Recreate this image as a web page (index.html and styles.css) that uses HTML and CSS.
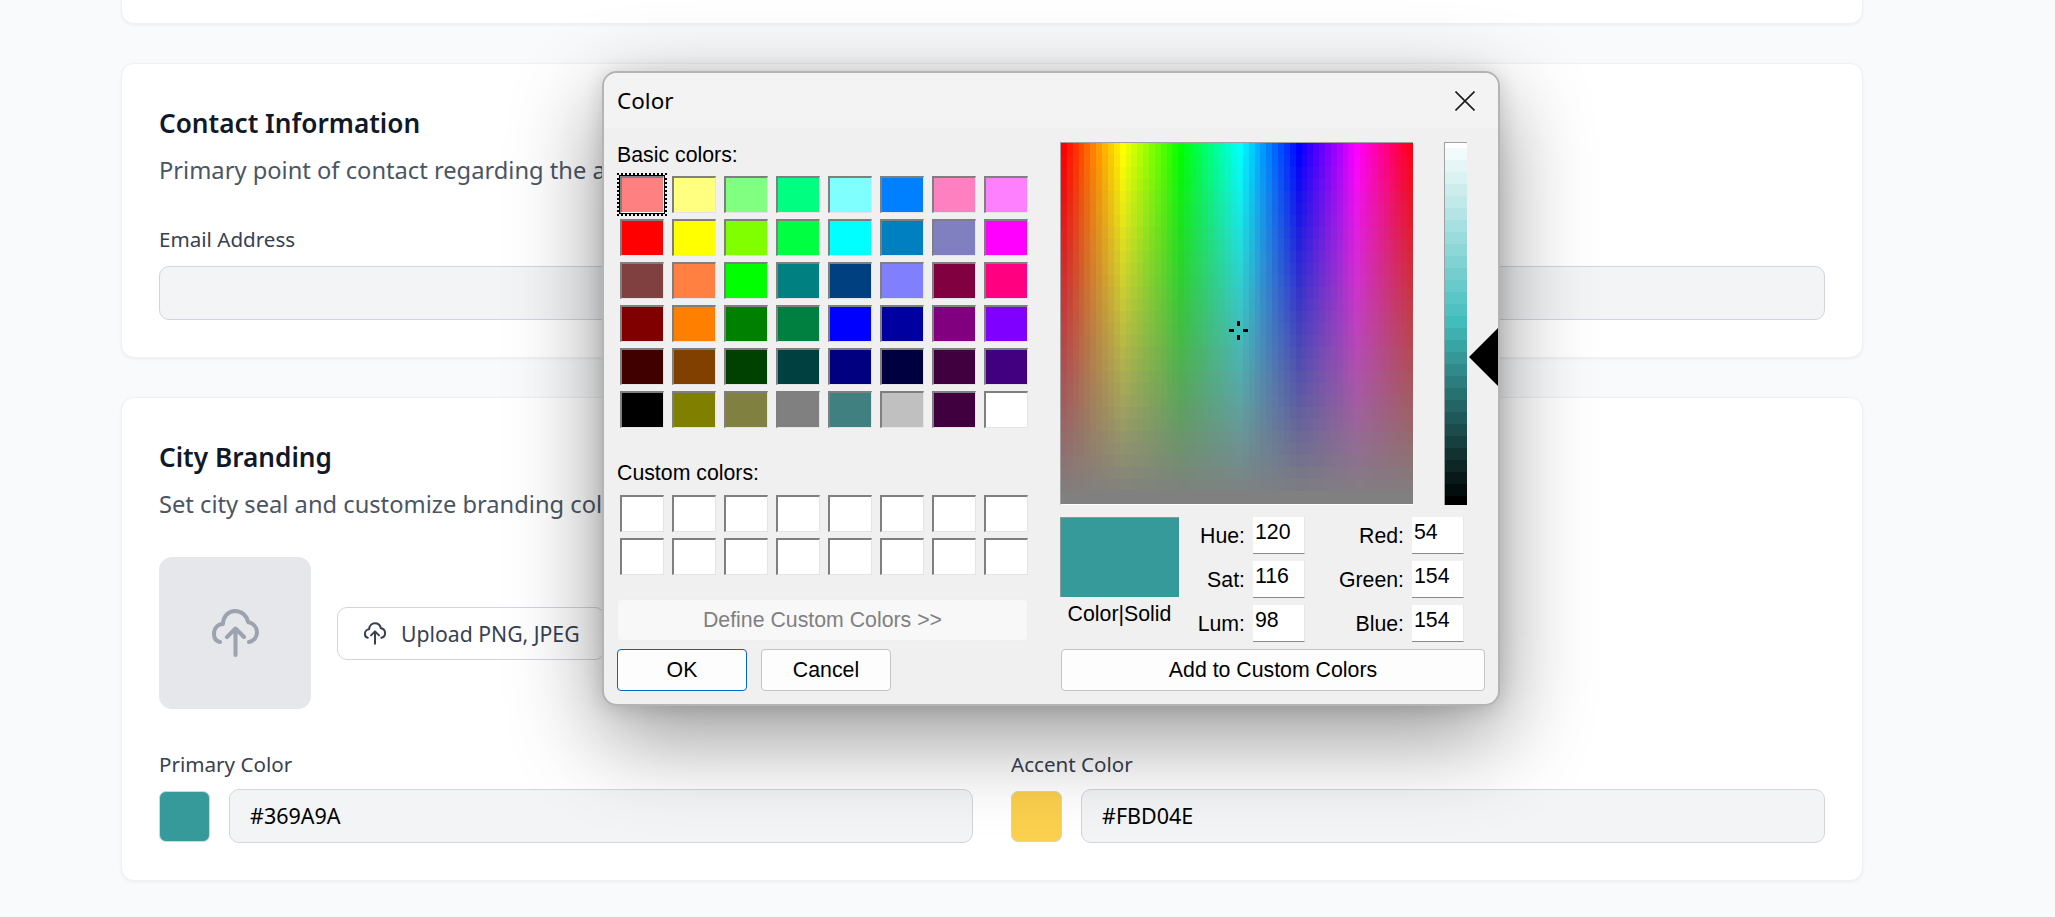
FILE: index.html
```html
<!DOCTYPE html>
<html>
<head>
  <meta charset="UTF-8">
  <title>City Settings</title>
  <link rel="stylesheet" href="styles.css">
</head>
<body>
  <div class="page">
    <div class="card card-cut"></div>

    <!-- Contact -->
    <section class="card">
      <h2>Contact Information</h2>
      <p class="desc">Primary point of contact regarding the a</p>
      <label class="label">Email Address</label>
      <div class="input"></div>
    </section>

    <!-- Branding -->
    <section class="card">
      <h2>City Branding</h2>
      <p class="desc">Set city seal and customize branding col</p>
      <div class="seal-row">
        <div class="seal">
          <svg class="seal-icon" viewBox="7 9 47 48"><path d="M15 42C10 41 9 37 9 34C9 28 13 24 18 24C18 16 24 11 30 11C37 11 42 16 43 22C48 23 52 27 52 32C52 37 49 41 44 42M30.500 55V29M22 37L30.500 28.500L39 37"/></svg>
        </div>
        <div class="upload-btn">
          <svg class="upload-icon" viewBox="7 9 47 48"><path d="M15 42C10 41 9 37 9 34C9 28 13 24 18 24C18 16 24 11 30 11C37 11 42 16 43 22C48 23 52 27 52 32C52 37 49 41 44 42M30.500 55V29M22 37L30.500 28.500L39 37"/></svg>
          Upload PNG, JPEG
        </div>
      </div>
      <div class="color-cols">
        <div>
          <label class="label">Primary Color</label>
          <div class="color-row">
            <div class="color-chip chip-primary"></div>
            <div class="input">#369A9A</div>
          </div>
        </div>
        <div>
          <label class="label">Accent Color</label>
          <div class="color-row">
            <div class="color-chip chip-accent"></div>
            <div class="input">#FBD04E</div>
          </div>
        </div>
      </div>
    </section>
  </div>

  <!-- Color dialog -->
  <div class="dialog">
    <div class="dialog-title">
      <span>Color</span>
      <svg class="close" viewBox="0 0 20 20"><path d="M0.500 0.500L19.500 19.500M19.500 0.500L0.500 19.500"/></svg>
    </div>
    <div class="dialog-body">
      <div class="col-left">
        <div class="dlg-label">Basic colors:</div>
        <div class="swatches" id="basicColors"></div>
        <div class="dlg-label custom-label">Custom colors:</div>
        <div class="swatches" id="customColors"></div>
        <div class="dlg-btn define-btn">Define Custom Colors &gt;&gt;</div>
        <div class="btn-row">
          <div class="dlg-btn ok-btn">OK</div>
          <div class="dlg-btn cancel-btn">Cancel</div>
        </div>
      </div>
      <div class="col-right">
        <div class="picker-row">
          <div class="spectrum">
            <canvas id="spectrum" width="352" height="361"></canvas>
            <div class="cross">
              <i class="cross-t"></i><i class="cross-b"></i><i class="cross-l"></i><i class="cross-r"></i>
            </div>
          </div>
          <div class="lum">
            <canvas id="lum" width="22" height="362"></canvas>
            <div class="lum-arrow"></div>
          </div>
        </div>
        <div class="values-row">
          <div class="preview-col">
            <div class="preview"></div>
            <div class="preview-name">Color|Solid</div>
          </div>
          <div class="fields">
            <span class="f-label">Hue:</span><div class="f-input">120</div>
            <span class="f-label">Red:</span><div class="f-input">54</div>
            <span class="f-label">Sat:</span><div class="f-input">116</div>
            <span class="f-label">Green:</span><div class="f-input">154</div>
            <span class="f-label">Lum:</span><div class="f-input">98</div>
            <span class="f-label">Blue:</span><div class="f-input">154</div>
          </div>
        </div>
        <div class="dlg-btn add-btn">Add to Custom Colors</div>
      </div>
    </div>
  </div>

  <script src="script.js"></script>
</body>
</html>
```

FILE: styles.css
```css
* {
  box-sizing: border-box;
}
html, body {
  margin: 0;
  height: 100%;
  overflow: hidden;
}
body {
  font-family: "Noto Sans", sans-serif;
  background: #f9fafb;
  color: #111827;
  position: relative;
}
.page {
  padding: 0 192px 0 121px;
  display: flex;
  flex-direction: column;
  gap: 39px;
}
.card {
  background: #fff;
  border: 1px solid #f0f1f3;
  border-radius: 13px;
  box-shadow: 0 1px 3px rgba(0, 0, 0, 0.06);
  padding: 42px 37px 37px;
}
.card-cut {
  height: 24px;
  padding: 0;
  border-top: 0;
  border-radius: 0 0 13px 13px;
}
h2 {
  margin: 0;
  font-size: 26.200px;
  line-height: 34px;
  font-weight: 600;
}
.desc {
  margin: 13px 0 0;
  font-size: 23.700px;
  line-height: 34px;
  color: #4b5563;
  white-space: nowrap;
}
.label {
  display: block;
  font-size: 20.600px;
  line-height: 26px;
  color: #374151;
}
.card > .label {
  margin-top: 39px;
}
.card > .input {
  margin-top: 14px;
}
.input {
  flex: 1;
  height: 54px;
  padding: 0 20px;
  background: #f3f4f6;
  border: 1px solid #d1d5db;
  border-radius: 10px;
  font-size: 21.500px;
  line-height: 52px;
  color: #000;
}
.seal-row {
  display: flex;
  align-items: center;
  gap: 26px;
  margin-top: 36px;
}
.seal {
  width: 152px;
  height: 152px;
  background: #e5e7eb;
  border-radius: 13px;
  display: flex;
  align-items: center;
  justify-content: center;
}
.seal-icon, .upload-icon {
  fill: none;
  stroke-linecap: round;
  stroke-linejoin: round;
}
.seal-icon {
  width: 47px;
  height: 48px;
  stroke: #9ca3af;
  stroke-width: 4;
}
.upload-btn {
  display: flex;
  align-items: center;
  gap: 15px;
  height: 53px;
  padding: 0 24px 0 26px;
  background: #fff;
  border: 1px solid #d1d5db;
  border-radius: 10px;
  font-size: 21.200px;
  white-space: nowrap;
  color: #374151;
}
.upload-icon {
  width: 22px;
  height: 23px;
  stroke: #374151;
  stroke-width: 4.300;
}
.color-cols {
  display: grid;
  grid-template-columns: 1fr 1fr;
  gap: 38px;
  margin-top: 42px;
}
.color-row {
  display: flex;
  align-items: center;
  gap: 19px;
  margin-top: 12px;
}
.color-chip {
  width: 51px;
  height: 51px;
  border: 1px solid #d1d5db;
  border-radius: 7px;
}
.chip-primary {
  background: #369a9a;
}
.chip-accent {
  background: #fbd04e;
}

/* dialog */
.dialog {
  position: absolute;
  left: 602px;
  top: 71px;
  width: 898px;
  height: 635px;
  background: #f0f0f0;
  border: 2px solid #b4b4b4;
  border-radius: 15px;
  box-shadow: 0 30px 90px rgba(0, 0, 0, 0.42), 0 2px 20px rgba(0, 0, 0, 0.14);
  overflow: hidden;
  font-family: "Liberation Sans", Arial, sans-serif;
  font-size: 21.300px;
  color: #000;
}
.dialog-title {
  height: 55px;
  padding: 0 23px 0 13px;
  background: #f3f3f3;
  display: flex;
  align-items: center;
  justify-content: space-between;
  font-family: "Noto Sans", sans-serif;
  font-size: 22.500px;
}
.close {
  width: 20px;
  height: 20px;
  fill: none;
  stroke: #1c1c1c;
  stroke-width: 1.600;
}
.dialog-body {
  display: flex;
  gap: 32px;
  padding: 14px 0 0 13px;
}
.col-left {
  width: 411px;
}
.dlg-label {
  height: 34px;
  line-height: 26px;
}
.custom-label {
  margin-top: 30px;
  height: 37px;
  line-height: 30px;
}
.swatches {
  display: grid;
  grid-template-columns: repeat(8, 44px);
  grid-auto-rows: 37px;
  gap: 6px 8px;
  padding-left: 3px;
}
.swatch {
  border-style: solid;
  border-width: 2px 1px 1px 2px;
  border-color: #7f7f7f #e4e4e4 #e4e4e4 #7f7f7f;
}
.swatch.selected {
  border-color: #7f7f7f #fff #fff #7f7f7f;
  box-shadow: 0 0 0 1px #000;
  outline: 2px dotted #000;
  outline-offset: 1px;
}
.dlg-btn {
  display: flex;
  align-items: center;
  justify-content: center;
  height: 42px;
  background: #fdfdfd;
  border: 1px solid #c4c4c4;
  border-radius: 4px;
}
.define-btn {
  margin-top: 24px;
  background: #f8f8f8;
  border-color: #eeeeee;
  color: #808080;
}
.btn-row {
  display: flex;
  gap: 14px;
  margin-top: 8px;
}
.ok-btn, .cancel-btn {
  width: 130px;
}
.ok-btn {
  border-color: #0067c0;
}
.col-right {
  width: 425px;
}
.picker-row {
  display: flex;
  gap: 31px;
}
.spectrum {
  position: relative;
  width: 353px;
  height: 363px;
  border-style: solid;
  border-width: 1px 0 1px 1px;
  border-color: #a0a0a0 #fff #fff #a0a0a0;
}
.spectrum canvas, .lum canvas {
  display: block;
}
.cross i {
  position: absolute;
  background: #000;
}
.cross-t, .cross-b {
  left: 176px;
  width: 3px;
  height: 5px;
}
.cross-l, .cross-r {
  top: 186px;
  width: 5px;
  height: 3px;
}
.cross-t {
  top: 178px;
}
.cross-b {
  top: 192px;
}
.cross-l {
  left: 168px;
}
.cross-r {
  left: 182px;
}
.lum {
  position: relative;
  width: 23px;
  height: 363px;
  border-style: solid;
  border-width: 1px 0 0 1px;
  border-color: #a0a0a0;
}
.lum-arrow {
  position: absolute;
  left: 24px;
  top: 185px;
  border-style: solid;
  border-width: 29px 29px 29px 0;
  border-color: transparent #000 transparent transparent;
}
.values-row {
  display: flex;
  margin-top: 12px;
}
.preview-col {
  width: 119px;
  text-align: center;
}
.preview {
  height: 80px;
  background: #369a9a;
  border-top: 1px solid #8a9a9a;
  border-left: 1px solid #8a9a9a;
}
.preview-name {
  margin-top: 6px;
  line-height: 22px;
}
.fields {
  display: grid;
  grid-template-columns: 66px 52px 91px 52px;
  grid-auto-rows: 37px;
  gap: 7px 8px;
}
.f-label {
  text-align: right;
  line-height: 39px;
}
.f-input {
  padding-left: 2px;
  line-height: 31px;
  background: #fff;
  border-bottom: 1px solid #8a8a8a;
  border-right: 1px solid #e6e6e6;
}
.add-btn {
  width: 424px;
  margin: 7px 0 0 1px;
}
```

FILE: script.js
```js
const basic = [
  "#ff8080", "#ffff80", "#80ff80", "#00ff80", "#80ffff", "#0080ff", "#ff80c0", "#ff80ff",
  "#ff0000", "#ffff00", "#80ff00", "#00ff40", "#00ffff", "#0080c0", "#8080c0", "#ff00ff",
  "#804040", "#ff8040", "#00ff00", "#008080", "#004080", "#8080ff", "#800040", "#ff0080",
  "#800000", "#ff8000", "#008000", "#008040", "#0000ff", "#0000a0", "#800080", "#8000ff",
  "#400000", "#804000", "#004000", "#004040", "#000080", "#000040", "#400040", "#400080",
  "#000000", "#808000", "#808040", "#808080", "#408080", "#c0c0c0", "#400040", "#ffffff"
];

function addSwatches(id, colors) {
  const box = document.getElementById(id);
  colors.forEach((c) => {
    const el = document.createElement("div");
    el.className = "swatch";
    el.style.background = c;
    box.appendChild(el);
  });
  return box;
}

addSwatches("basicColors", basic).firstChild.classList.add("selected");
addSwatches("customColors", new Array(16).fill("#ffffff"));

// hue across, saturation down, in the same coarse steps as the windows picker
const spec = document.getElementById("spectrum").getContext("2d");
const colW = 352 / 60;
for (let col = 0; col < 60; col++) {
  for (let row = 0; row < 30; row++) {
    const sat = 100 - (row * 100) / 29;
    spec.fillStyle = `hsl(${col * 6}, ${sat}%, 50%)`;
    spec.fillRect(Math.round(col * colW), row * 12, Math.ceil(colW), 13);
  }
}

const lum = document.getElementById("lum").getContext("2d");
for (let i = 0; i <= 30; i++) {
  lum.fillStyle = `hsl(180, 48%, ${100 - (i * 100) / 30}%)`;
  lum.fillRect(0, i * 12 - 7, 22, 12);
}
```
